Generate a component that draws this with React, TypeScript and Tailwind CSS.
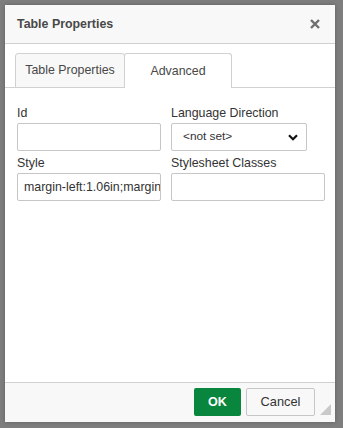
import React from "react";

export default function App() {
  const font = { fontFamily: '"Liberation Sans", Arial, sans-serif' };
  return (
    <div
      className="w-[343px] h-[428px] bg-[#7e7e7e] pt-[5px] pl-[5px] overflow-hidden"
      style={font}
    >
      <div className="w-[330px] h-[417px] bg-white flex flex-col shadow-[0_0_4px_rgba(0,0,0,0.25)]">
        {/* Header */}
        <div className="h-[39px] shrink-0 bg-[#f8f8f8] border-b border-[#d1d1d1] flex items-center justify-between pl-[12px] pr-[15px]">
          <span className="text-[12.4px] font-bold text-[#484848] leading-none">
            Table Properties
          </span>
          <svg width="10" height="10" viewBox="0 0 10 10" className="block">
            <path
              d="M1 1 L9 9 M9 1 L1 9"
              stroke="#6f6f6f"
              strokeWidth="2.4"
              strokeLinecap="butt"
            />
          </svg>
        </div>

        {/* Tabs */}
        <div className="h-[44px] shrink-0 flex items-end pl-[10px] border-b border-[#d1d1d1]">
          <div className="w-[110px] h-[35px] -mb-px bg-[#f8f8f8] border border-[#d1d1d1] rounded-t-[3px] flex items-center justify-center text-[12.4px] text-[#484848]">
            Table Properties
          </div>
          <div className="w-[108px] h-[35px] -mb-px -ml-px bg-white border border-b-0 border-[#d1d1d1] rounded-t-[3px] flex items-center justify-center text-[12.4px] text-[#484848]">
            Advanced
          </div>
        </div>

        {/* Body */}
        <div className="flex-1 pt-[18px] pl-[12px] pr-[10px] flex flex-col gap-[5px]">
          <div className="flex gap-[10px]">
            <div className="w-[144px] flex flex-col">
              <label className="text-[12.4px] leading-[15px] text-[#333] mb-[2px]">Id</label>
              <div className="h-[28px] border border-[#c6c6c6] rounded-[2px] bg-white" />
            </div>
            <div className="w-[154px] flex flex-col">
              <label className="text-[12.4px] leading-[15px] text-[#333] mb-[2px]">
                Language Direction
              </label>
              <div className="w-[136px] h-[28px] border border-[#c6c6c6] rounded-[2px] bg-white flex items-center justify-between pl-[11px] pr-[7px]">
                <span className="text-[11.8px] text-[#333]">&lt;not set&gt;</span>
                <svg width="10" height="7" viewBox="0 0 10 7" className="block mr-[1px]">
                  <path
                    d="M1 1.2 L5 5.2 L9 1.2"
                    fill="none"
                    stroke="#111"
                    strokeWidth="2.2"
                  />
                </svg>
              </div>
            </div>
          </div>
          <div className="flex gap-[10px]">
            <div className="w-[144px] flex flex-col">
              <label className="text-[12.4px] leading-[15px] text-[#333] mb-[2px]">Style</label>
              <input
                readOnly
                value="margin-left:1.06in;margin-right:auto"
                className="h-[28px] w-[144px] border border-[#c6c6c6] rounded-[2px] bg-white pl-[6px] text-[12.4px] text-[#333] outline-none"
                style={font}
              />
            </div>
            <div className="w-[154px] flex flex-col">
              <label className="text-[12.4px] leading-[15px] text-[#333] mb-[2px]">
                Stylesheet Classes
              </label>
              <div className="h-[28px] border border-[#c6c6c6] rounded-[2px] bg-white" />
            </div>
          </div>
        </div>

        {/* Footer */}
        <div className="relative h-[40px] shrink-0 bg-[#f8f8f8] border-t border-[#d1d1d1] flex items-start justify-end pt-[5px] pr-[20px] gap-[5px]">
          <div className="w-[47px] h-[28px] bg-[#09863e] rounded-[2px] flex items-center justify-center text-[12.6px] font-bold text-white">
            OK
          </div>
          <div className="w-[69px] h-[28px] bg-[#f8f8f8] border border-[#c6c6c6] rounded-[2px] flex items-center justify-center text-[12.8px] text-[#333]">
            Cancel
          </div>
          <svg
            width="11"
            height="11"
            viewBox="0 0 11 11"
            className="absolute right-[4px] bottom-[7px]"
          >
            <path d="M11 0 L11 11 L0 11 Z" fill="#c9c9c9" />
          </svg>
        </div>
      </div>
    </div>
  );
}
